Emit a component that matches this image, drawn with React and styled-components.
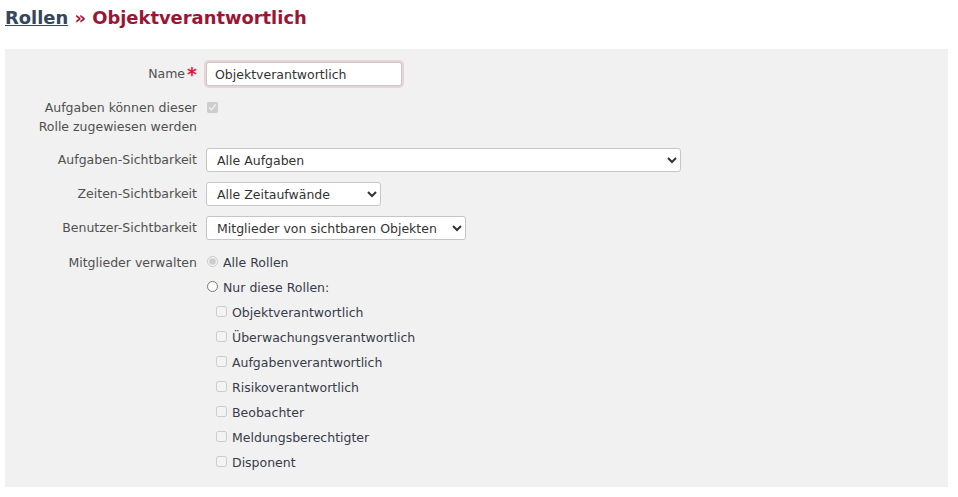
import React from "react";
import styled, { createGlobalStyle } from "styled-components";

const GlobalStyle = createGlobalStyle`
  body {
    margin: 0;
    background: #fff;
    font-family: "DejaVu Sans", Verdana, sans-serif;
    font-size: 12.5px;
    color: #484848;
  }
`;

const Page = styled.div`
  padding: 0 10px 8px 5px;
`;

const Title = styled.h2`
  margin: 0;
  padding: 7px 0 0;
  height: 49px;
  box-sizing: border-box;
  font-size: 17.9px;
  font-weight: bold;
  color: #9a1634;
`;

const TitleLink = styled.a`
  color: #35475a;
  text-decoration: underline;
`;

const Box = styled.div`
  background: #f1f1f1;
  padding: 13px 0 12px;
`;

const Row = styled.div`
  display: grid;
  grid-template-columns: 192px 1fr;
  column-gap: 9px;
  margin-bottom: ${(p) => p.$gap || 0}px;
`;

const Label = styled.label`
  text-align: right;
  line-height: ${(p) => p.$lh || 24}px;
  color: #505050;
`;

const Required = styled.span`
  color: #e8173a;
  font-size: 19px;
  font-weight: bold;
  line-height: 0;
  margin-left: 2px;
  position: relative;
  top: 3px;
`;

const TextInput = styled.input`
  box-sizing: border-box;
  width: 196px;
  height: 24px;
  border: 1px solid #c9c9c9;
  border-radius: 3px;
  box-shadow: 0 0 0 2px #ead3d7;
  padding: 0 8px;
  font: inherit;
  color: #333;
  outline: none;
`;

const Select = styled.select`
  box-sizing: border-box;
  width: ${(p) => p.$w}px;
  height: 24px;
  border: 1px solid #c6c6c6;
  border-radius: 3px;
  background: #fff;
  padding: 0 6px;
  font: inherit;
  color: #333;
`;

const Check = styled.input`
  width: 11px;
  height: 11px;
  margin: 0 5px 0 1px;
  accent-color: #888;
  vertical-align: middle;
  position: relative;
  top: -1px;
`;

const Choices = styled.div`
  display: flex;
  flex-direction: column;
`;

const Choice = styled.label`
  display: flex;
  align-items: center;
  height: 25px;
  padding-left: ${(p) => p.$indent || 0}px;
  color: #373c4a;
`;

const roles = [
  "Objektverantwortlich",
  "Überwachungsverantwortlich",
  "Aufgabenverantwortlich",
  "Risikoverantwortlich",
  "Beobachter",
  "Meldungsberechtigter",
  "Disponent",
];

export default function App() {
  return (
    <Page>
      <GlobalStyle />
      <Title>
        <TitleLink href="#">Rollen</TitleLink> » Objektverantwortlich
      </Title>
      <Box>
        <Row $gap={12}>
          <Label>
            Name<Required>*</Required>
          </Label>
          <div>
            <TextInput defaultValue="Objektverantwortlich" />
          </div>
        </Row>
        <Row $gap={12}>
          <Label $lh={19}>
            Aufgaben können dieser
            <br />
            Rolle zugewiesen werden
          </Label>
          <div>
            <Check type="checkbox" defaultChecked disabled style={{ marginTop: 4 }} />
          </div>
        </Row>
        <Row $gap={10}>
          <Label>Aufgaben-Sichtbarkeit</Label>
          <div>
            <Select $w={475}>
              <option>Alle Aufgaben</option>
            </Select>
          </div>
        </Row>
        <Row $gap={10}>
          <Label>Zeiten-Sichtbarkeit</Label>
          <div>
            <Select $w={175}>
              <option>Alle Zeitaufwände</option>
            </Select>
          </div>
        </Row>
        <Row $gap={10}>
          <Label>Benutzer-Sichtbarkeit</Label>
          <div>
            <Select $w={260}>
              <option>Mitglieder von sichtbaren Objekten</option>
            </Select>
          </div>
        </Row>
        <Row>
          <Label $lh={25}>Mitglieder verwalten</Label>
          <Choices>
            <Choice>
              <Check type="radio" name="m" defaultChecked disabled />
              Alle Rollen
            </Choice>
            <Choice>
              <Check type="radio" name="m" />
              Nur diese Rollen:
            </Choice>
            {roles.map((r) => (
              <Choice key={r} $indent={9}>
                <Check type="checkbox" disabled />
                {r}
              </Choice>
            ))}
          </Choices>
        </Row>
      </Box>
    </Page>
  );
}
